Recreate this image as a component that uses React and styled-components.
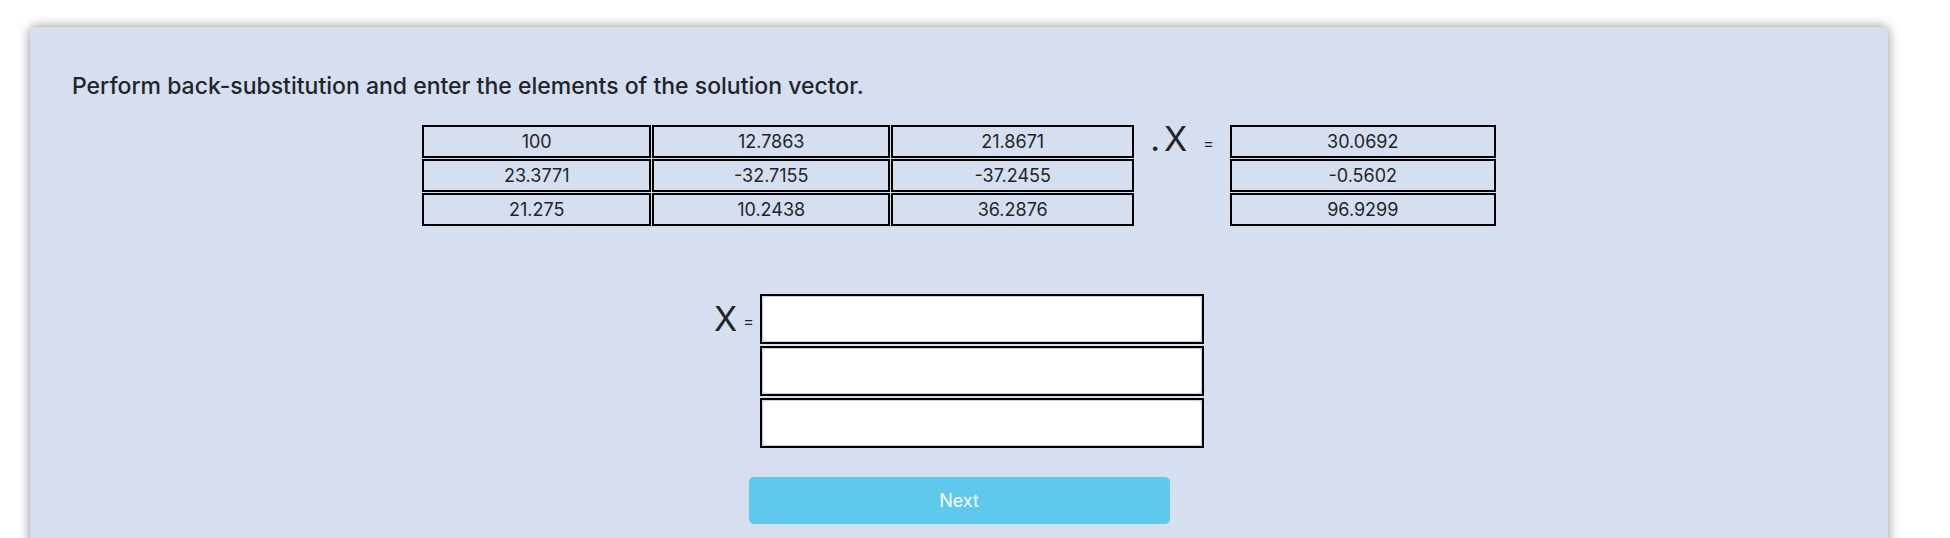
import React from "react";
import styled, { createGlobalStyle } from "styled-components";

const GlobalStyle = createGlobalStyle`
  html, body {
    margin: 0;
    padding: 0;
    background: #fff;
    overflow: hidden;
  }
  body {
    font-family: "Inter", "Liberation Sans", sans-serif;
    color: #212529;
  }
`;

const Page = styled.div`
  padding: 27px 62px 0 30px;
  height: 538px;
  box-sizing: border-box;
`;

const Card = styled.section`
  background: #d6dff0;
  border-radius: 5px;
  box-shadow: 0 0 12px rgba(0, 0, 0, 0.45);
  padding: 45px 42px 60px;
  min-height: 600px;
  box-sizing: border-box;
`;

const Heading = styled.h2`
  margin: 0;
  font-size: 23px;
  font-weight: 500;
  line-height: 28px;
  color: #212529;
`;

const EquationRow = styled.div`
  display: flex;
  justify-content: center;
  align-items: flex-start;
  gap: 16px;
  margin-top: 25px;
`;

const Grid = styled.table`
  border-collapse: separate;
  border-spacing: 1px;
  margin: -1px;
  width: ${(p) => p.$width}px;
  table-layout: fixed;
`;

const Cell = styled.td`
  border: 2px solid #000;
  height: 29px;
  padding: 0;
  text-align: center;
  font-size: 18px;
  line-height: 29px;
  color: #212529;
  width: ${(p) => (p.$w ? `${p.$w}px` : "auto")};
`;

const Symbol = styled.span`
  font-size: ${(p) => p.$size}px;
  line-height: 1;
  margin-top: ${(p) => p.$top}px;
  color: #212529;
  white-space: nowrap;
`;

const Dot = styled.span`
  margin-right: 4px;
`;

const AnswerRow = styled.div`
  display: flex;
  justify-content: center;
  align-items: flex-start;
  gap: 6px;
  margin-top: 68px;
`;

const InputStack = styled.div`
  display: flex;
  flex-direction: column;
  gap: 2px;
  width: 444px;
`;

const Slot = styled.div`
  border: 2px solid #000;
  height: 46px;
`;

const Field = styled.input`
  box-sizing: border-box;
  width: 100%;
  height: 100%;
  margin: 0;
  border: 1px solid #c8ccd2;
  border-radius: 4px;
  background: #fff;
  outline: none;
  font-family: inherit;
  font-size: 16px;
  padding: 0 10px;
`;

const Actions = styled.div`
  display: flex;
  justify-content: center;
  margin-top: 29px;
`;

const NextButton = styled.button`
  width: 421px;
  height: 47px;
  border: none;
  border-radius: 5px;
  background: #5ec8ed;
  color: #fff;
  font-family: inherit;
  font-size: 18px;
  cursor: pointer;
`;

const matrix = [
  ["100", "12.7863", "21.8671"],
  ["23.3771", "-32.7155", "-37.2455"],
  ["21.275", "10.2438", "36.2876"],
];
const widths = [225, 234, 239];
const rhs = ["30.0692", "-0.5602", "96.9299"];

export default function App() {
  return (
    <>
      <GlobalStyle />
      <Page>
        <Card>
          <Heading>
            Perform back-substitution and enter the elements of the solution vector.
          </Heading>

          <EquationRow>
            <Grid $width={712}>
              <tbody>
                {matrix.map((row, i) => (
                  <tr key={i}>
                    {row.map((v, j) => (
                      <Cell key={j} $w={i === 0 ? widths[j] : undefined}>
                        {v}
                      </Cell>
                    ))}
                  </tr>
                ))}
              </tbody>
            </Grid>
            <Symbol $size={34} $top={-3}>
              <Dot>.</Dot>X
            </Symbol>
            <Symbol $size={16} $top={10}>=</Symbol>
            <Grid $width={268}>
              <tbody>
                {rhs.map((v, i) => (
                  <tr key={i}>
                    <Cell>{v}</Cell>
                  </tr>
                ))}
              </tbody>
            </Grid>
          </EquationRow>

          <AnswerRow>
            <Symbol $size={34} $top={8}>X</Symbol>
            <Symbol $size={16} $top={19}>=</Symbol>
            <InputStack>
              <Slot><Field type="text" /></Slot>
              <Slot><Field type="text" /></Slot>
              <Slot><Field type="text" /></Slot>
            </InputStack>
          </AnswerRow>

          <Actions>
            <NextButton>Next</NextButton>
          </Actions>
        </Card>
      </Page>
    </>
  );
}
